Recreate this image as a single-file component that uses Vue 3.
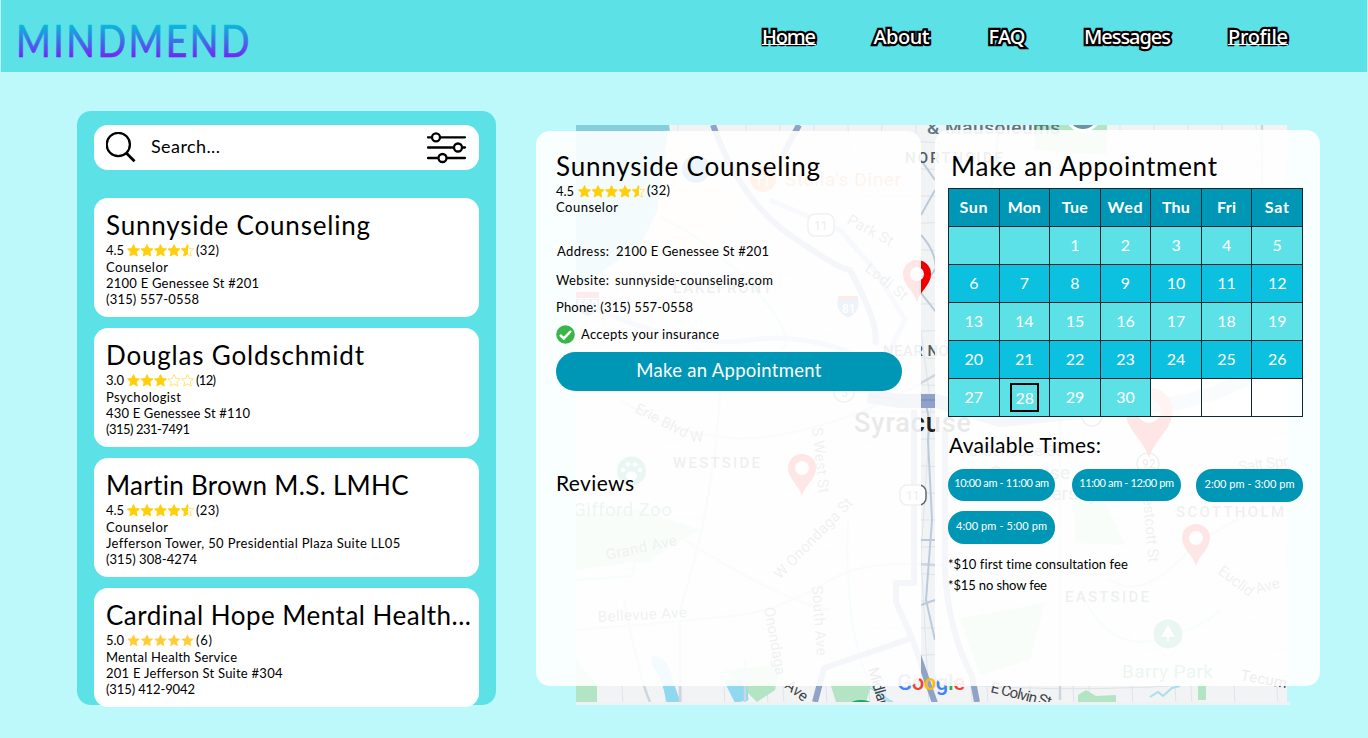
<script setup>
// Spreads a label over a given width by adjusting its tracking.
const vFit = {
  mounted(el, { value }) {
    if (!value) return
    const range = document.createRange()
    range.selectNodeContents(el)
    const natural = range.getBoundingClientRect().width
    const gaps = Math.max(1, el.textContent.length - 1)
    el.style.letterSpacing = `${(value - natural) / gaps}px`
  },
}

const nav = [
  { label: 'Home', w: 54, ul: true },
  { label: 'About', w: 56 },
  { label: 'FAQ', w: 37 },
  { label: 'Messages', w: 87 },
  { label: 'Profile', w: 60, ul: true },
]

const STAR = 'M6.5 .6 8.3 4.4 12.5 4.9 9.4 7.8 10.2 12 6.5 9.9 2.8 12 3.6 7.8 .5 4.9 4.7 4.4Z'
const HALF = 'M6.5 .6 6.5 9.9 2.8 12 3.6 7.8 .5 4.9 4.7 4.4Z'
const starsOf = (n) => [1, 2, 3, 4, 5].map((i) => (n >= i ? 'full' : n >= i - 0.5 ? 'half' : 'empty'))

const providers = [
  { name: 'Sunnyside Counseling', nw: 264, rating: '4.5', n: 4.5, count: '(32)', cw: 23, lines: [['Counselor', 62], ['2100 E Genessee St #201', 153], ['(315) 557-0558', 93]] },
  { name: 'Douglas Goldschmidt', nw: 258, rating: '3.0', n: 3, count: '(12)', cw: 20, lines: [['Psychologist', 75], ['430 E Genessee St #110', 144], ['(315) 231-7491', 84]] },
  { name: 'Martin Brown M.S. LMHC', nw: 303, rating: '4.5', n: 4.5, count: '(23)', cw: 23, lines: [['Counselor', 62], ['Jefferson Tower, 50 Presidential Plaza Suite LL05', 294], ['(315) 308-4274', 91]] },
  { name: 'Cardinal Hope Mental Health...', nw: 365, rating: '5.0', n: 5, count: '(6)', cw: 16, lines: [['Mental Health Service', 131], ['201 E Jefferson St Suite #304', 176], ['(315) 412-9042', 89]] },
]

const days = [['Sun', 28], ['Mon', 33], ['Tue', 26], ['Wed', 35], ['Thu', 28], ['Fri', 19], ['Sat', 24]]
const weeks = [
  ['', '', 1, 2, 3, 4, 5],
  [6, 7, 8, 9, 10, 11, 12],
  [13, 14, 15, 16, 17, 18, 19],
  [20, 21, 22, 23, 24, 25, 26],
  [27, 28, 29, 30, null, null, null],
]
const times = [['10:00 am - 11:00 am', 95], ['11:00 am - 12:00 pm', 95], ['2:00 pm - 3:00 pm', 90], ['4:00 pm - 5:00 pm', 91]]

const minor = []
for (let i = 0; i < 22; i++) {
  minor.push(`M${576 + i * 34} 125 l${(i % 3) * 9 - 12} 150 l18 130 l-10 150 l8 150`)
  minor.push(`M576 ${140 + i * 27} q180 ${(i % 4) * 8 - 14} 350 2 t364 -6`)
}
const pins = [[917, 302, 1], [802, 496, 1], [1196, 566, 1], [1149, 458, 1.68]]
</script>

<template>
  <div class="page">
    <header class="top">
      <svg class="logo" width="240" height="50" viewBox="0 0 240 50">
        <defs>
          <linearGradient id="brand" x1="0" y1="9" x2="0" y2="43" gradientUnits="userSpaceOnUse">
            <stop offset="0" stop-color="#00c4d8" />
            <stop offset="1" stop-color="#7424f5" />
          </linearGradient>
        </defs>
        <text x="-4" y="42.500" textLength="236" lengthAdjust="spacingAndGlyphs" fill="url(#brand)" stroke="url(#brand)" stroke-width=".7">MINDMEND</text>
      </svg>
      <nav>
        <a v-for="i in nav" :key="i.label" :class="{ ul: i.ul }"><span v-fit="i.w">{{ i.label }}</span></a>
      </nav>
    </header>

    <main>
      <aside>
        <div class="search">
          <svg width="32" height="32" viewBox="0 0 32 32" fill="none" stroke="#000" stroke-width="2.3">
            <circle cx="12.3" cy="12.500" r="11.6" /><path d="M20.300 21 28.500 29.300" stroke-width="2.800" />
          </svg>
          <span v-fit="69" class="ph">Search...</span>
          <svg class="filter" width="40" height="32" viewBox="0 0 40 32" fill="#fff" stroke="#000" stroke-width="2.3" stroke-linecap="round">
            <path d="M1 5.300H38M1 15.500H38M1 26H38" />
            <circle cx="9" cy="5.300" r="4" /><circle cx="31" cy="15.500" r="4" /><circle cx="15.500" cy="26" r="4" />
          </svg>
        </div>
        <article v-for="p in providers" :key="p.name" class="card">
          <h2><span v-fit="p.nw">{{ p.name }}</span></h2>
          <div class="rating">
            <span class="num">{{ p.rating }}</span>
            <svg width="68" height="13" viewBox="0 0 68 13" :class="{ warm: p.n === 5 }">
              <g v-for="(s, k) in starsOf(p.n)" :key="k" :transform="`translate(${k * 13.5} 0)`">
                <path :d="STAR" :class="s === 'full' ? 'full' : 'empty'" />
                <path v-if="s === 'half'" :d="HALF" class="full" />
              </g>
            </svg>
            <span v-fit="p.cw" class="count">{{ p.count }}</span>
          </div>
          <p v-for="l in p.lines" :key="l[0]"><span v-fit="l[1]">{{ l[0] }}</span></p>
        </article>
      </aside>

      <section class="stage">
        <svg class="map" width="714" height="580" viewBox="576 125 714 580">
          <rect x="576" y="125" width="711" height="580" fill="#f2f3f4" />
          <g fill="none" stroke="#dfe4ea" stroke-width="1"><path v-for="(d, k) in minor" :key="k" :d="d" /></g>
          <path d="M576 125H669Q674 150 668 190L640 245L576 290Z" fill="#85cfdc" />
          <path d="M668 130Q700 170 740 200L700 260L655 225Z" fill="#faf3e6" />
          <path d="M1035 125H1107V155L1035 150ZM576 515 640 510 700 530 650 560 576 570ZM1075 500 1105 502 1125 545 1075 543ZM960 618 1045 603 1030 660 980 675ZM576 660 597 685V702H576ZM724 670 780 665 775 690 757 702ZM829 680 872 683 866 702H836ZM1078 695 1086 690 1096 696 1116 695V702H1078ZM1198 684H1206V700H1198Z" fill="#b3e5c4" />
          <path d="M652 657Q668 655 672 680L680 702H667Q662 675 652 665ZM724 680H746L748 700 735 702ZM870 688 893 702" fill="#8fd8ee" stroke="#8fd8ee" />
          <path d="M660 217Q710 240 755 290T780 350M576 580 632 576 635 562 650 561 655 550M848 520Q845 600 858 650T893 702M1150 697 1158 692 1163 696 1172 688 1180 686M1085 600Q1110 650 1155 640T1220 610" fill="none" stroke="#a8dfec" stroke-width="2" />
          <g fill="none" stroke="#cdd5e0" stroke-width="2.5">
            <path d="M720 390Q715 500 680 610M576 630Q700 620 740 615T830 580 1000 575M620 400Q700 450 780 435T935 375M685 540Q780 600 830 610M624 600Q640 680 650 702M680 620V702M745 660V702M1060 420V700M1110 580Q1140 600 1180 560T1290 500M1000 125 970 330M1262 125V300" />
            <path d="M921 160 935 180M921 215 935 190M921 235Q935 250 936 268L921 290M921 293 936 312M921 400Q931 405 928 440L932 520 926 600 935 640M921 540H935M921 605 935 600" stroke-width="2" stroke="#bccbdc" />
          </g>
          <g fill="none" stroke="#8fa3c9" stroke-linejoin="round">
            <path d="M713 125Q740 200 790 235T850 270Q880 325 875 345M799 125 780 160" stroke-width="6" />
            <path d="M576 300Q680 350 750 340T900 375M770 200 840 230 875 270 905 320 880 370" stroke-width="5" stroke="#b1bfd9" />
            <path d="M868 396 900 401 936 401 1000 420Q1100 410 1160 405T1287 355" stroke-width="14" />
            <path d="M914 410V583H896V602L912 638 936 706M912 638 824 668 815 702" stroke-width="6" />
            <path d="M945 430V570Q948 630 972 676L977 702" stroke-width="6" />
            <path d="M868 396 900 400 936 400" stroke="#6f86b5" stroke-width="1" />
          </g>
          <g class="lbl">
            <text x="927" y="134" fill="#5d7783" textLength="133" class="maus">&amp; Mausoleums</text>
            <text x="905" y="163" textLength="98" class="caps">NORTHSIDE</text>
            <text x="673" y="293" textLength="99" class="caps">LAKEFRONT</text>
            <text x="883" y="356" textLength="96" class="caps">NEAR NORTH</text>
            <text x="673" y="468" textLength="87" class="caps">WESTSIDE</text>
            <text x="1176" y="517" textLength="108" class="caps">SCOTTHOLM</text>
            <text x="1065" y="602" textLength="84" class="caps">EASTSIDE</text>
            <text x="785" y="186" fill="#ed8442" textLength="116" class="poi">Stella's Diner</text>
            <text x="573" y="516" fill="#3b9d82" textLength="99" class="poi">Gifford Zoo</text>
            <text x="1122" y="678" fill="#419b74" textLength="91" class="poi">Barry Park</text>
            <text x="990" y="479" textLength="80" class="poi">Syracuse</text><text x="1015" y="500" class="poi">University</text>
            <text x="969" y="456" class="road" textLength="92">E Genesee St</text>
            <text x="854" y="432" textLength="117" class="city">Syracuse</text>
            <text transform="translate(634 412) rotate(27)" class="road">Erie Blvd</text>
            <text x="690" y="442" class="road">W</text>
            <text transform="translate(846 223) rotate(28)" class="road" textLength="50">Park St</text>
            <text transform="translate(864 270) rotate(39)" class="road" textLength="50">Lodi St</text>
            <text transform="translate(812 428) rotate(84)" class="road" textLength="66">S West St</text>
            <text transform="translate(607 560) rotate(-12)" class="road" textLength="72">Grand Ave</text>
            <text transform="translate(598 622) rotate(-3)" class="road" textLength="89">Bellevue Ave</text>
            <text transform="translate(780 580) rotate(-46)" class="road" textLength="106">W Onondaga St</text>
            <text transform="translate(764 608) rotate(80)" class="road">Onondaga</text>
            <text transform="translate(784 687) rotate(38)" class="road dark">Ave</text>
            <text transform="translate(812 586) rotate(86)" class="road" textLength="70">South Ave</text>
            <text transform="translate(868 669) rotate(74)" class="road dark" textLength="50">Midland</text>
            <text transform="translate(990 692) rotate(14)" class="road dark" textLength="62">E Colvin St</text>
            <text transform="translate(1143 498) rotate(85)" class="road" textLength="65">estcott St</text>
            <text transform="translate(1239 472) rotate(-7)" class="road" textLength="50">Salt Spr</text>
            <text transform="translate(1217 573) rotate(37)" class="road" textLength="40">Euclid</text>
            <text transform="translate(1257 594) rotate(-16)" class="road">Ave</text>
            <text transform="translate(1240 680) rotate(10)" class="road dark" textLength="47">Tecum</text>
          </g>
          <g fill="#fff" stroke="#5f686d" stroke-width="1.5" class="shield">
            <rect x="808" y="214" width="26" height="22" rx="7" /><rect x="900" y="485" width="26" height="20" rx="7" />
            <circle cx="844" cy="392" r="10" /><circle cx="1148" cy="464" r="11" /><circle cx="1092" cy="416" r="10" />
            <g fill="#555" stroke="none"><text x="814" y="230">11</text><text x="906" y="500">11</text><text x="841" y="397">5</text><text x="1142" y="468">92</text></g>
          </g>
          <g class="shield"><path d="M838 300H858Q861 311 848 318Q835 311 838 300Z" fill="#537ebd" /><path d="M838 296H858V300H838Z" fill="#d64d4d" /><text x="842" y="313" fill="#fff">81</text>
            <path d="M576 299H599Q601 311 588 316 577 312 576 306Z" fill="#537ebd" /><path d="M576 292H599V298H576Z" fill="#d64d4d" /><text x="577" y="309" fill="#fff">590</text></g>
          <circle cx="696" cy="169" r="15" fill="#3d9bea" stroke="#fff" stroke-width="2" /><circle cx="763" cy="179" r="13" fill="#ff8b3d" />
          <path d="M759 172V186M767 172V186M756 172V178H762V172" stroke="#fff" stroke-width="1.5" fill="none" />
          <circle cx="631.500" cy="471" r="14.500" fill="#2aa383" /><g fill="#fff"><ellipse cx="631.500" cy="476" rx="5.500" ry="4.500" /><circle cx="623" cy="470" r="2.200" /><circle cx="628" cy="464.500" r="2.200" /><circle cx="635" cy="464.500" r="2.200" /><circle cx="640" cy="470" r="2.200" /></g>
          <path d="M1157 643 1168 655 1179 643Z" fill="#fff" /><circle cx="1168" cy="634" r="14.500" fill="#20a56d" /><path d="M1168 625 1175 637H1169V641H1167V637H1161Z" fill="#fff" />
          <circle cx="1083" cy="114" r="18" fill="#fff" /><circle cx="1083" cy="114" r="15" fill="#70919d" />
          <ellipse cx="861" cy="703" rx="10" ry="3" fill="#16a765" />
          <g class="google"><text x="897" y="690" textLength="68"><tspan fill="#4285f4">G</tspan><tspan fill="#ea4335">o</tspan><tspan fill="#fbbc05">o</tspan><tspan fill="#4285f4">g</tspan><tspan fill="#34a853">l</tspan><tspan fill="#ea4335">e</tspan></text></g>
          <path v-for="(p, k) in pins" :key="'p' + k" :transform="`translate(${p[0]} ${p[1]}) scale(${p[2]})`" fill="#ee0000" fill-rule="evenodd" d="M0 0C-3-11-14-17-14-28A14 14 0 0 1 14-28C14-17 3-11 0 0ZM-7-28A7 7 0 1 0 7-28A7 7 0 1 0-7-28Z" />
          <rect x="576" y="702" width="714" height="3" fill="#eef2f2" />
        </svg>

        <div class="panel detail">
          <h2><span v-fit="264">Sunnyside Counseling</span></h2>
          <div class="rating">
            <span class="num">4.5</span>
            <svg width="68" height="13" viewBox="0 0 68 13">
              <g v-for="(s, k) in starsOf(4.5)" :key="k" :transform="`translate(${k * 13.5} 0)`">
                <path :d="STAR" :class="s === 'full' ? 'full' : 'empty'" />
                <path v-if="s === 'half'" :d="HALF" class="full" />
              </g>
            </svg>
            <span v-fit="23" class="count">(32)</span>
          </div>
          <p><span v-fit="62">Counselor</span></p>
          <p class="address"><span v-fit="52" class="key">Address:</span><span v-fit="153">2100 E Genessee St #201</span></p>
          <p class="site"><span v-fit="53" class="key">Website:</span><span v-fit="158">sunnyside-counseling.com</span></p>
          <p class="phone"><span v-fit="137">Phone: (315) 557-0558</span></p>
          <p class="accepts">
            <svg width="19" height="19" viewBox="0 0 19 19"><circle cx="9.500" cy="9.500" r="9.300" fill="#39b54a" /><path d="M4 9.800 7.800 13.400 15 6" fill="none" stroke="#fff" stroke-width="2.500" /></svg>
            <span v-fit="138">Accepts your insurance</span>
          </p>
          <button class="book"><span v-fit="185">Make an Appointment</span></button>
          <h3><span v-fit="78">Reviews</span></h3>
        </div>

        <div class="panel booking">
          <h2><span v-fit="266">Make an Appointment</span></h2>
          <table>
            <thead><tr><th v-for="d in days" :key="d[0]"><span v-fit="d[1]">{{ d[0] }}</span></th></tr></thead>
            <tbody>
              <tr v-for="(w, r) in weeks" :key="r" :class="{ deep: r % 2 }">
                <td v-for="(d, c) in w" :key="c" :class="{ off: d === null }"><span :class="{ picked: d === 28 }">{{ d }}</span></td>
              </tr>
            </tbody>
          </table>
          <h3><span v-fit="152">Available Times:</span></h3>
          <div class="times">
            <button v-for="(t, k) in times" :key="t[0]" :class="'t' + k"><span v-fit="t[1]">{{ t[0] }}</span></button>
          </div>
          <p class="fee"><span v-fit="180">*$10 first time consultation fee</span></p>
          <p class="fee"><span v-fit="99">*$15 no show fee</span></p>
        </div>
      </section>
    </main>
  </div>
</template>

<style>
body { background: #bdf9fa; overflow: hidden; }
</style>

<style scoped>
.page { width: 1368px; height: 738px; overflow: hidden; background: #bdf9fa; color: #000; font: 13px/16px Lato, sans-serif; }
.page * { box-sizing: border-box; }
h2, h3, p { margin: 0; font-weight: 400; white-space: nowrap; }
button { border: 0; padding: 0; font-family: inherit; color: #fff; background: #0097b6; white-space: nowrap; }
.top { display: flex; justify-content: space-between; height: 72px; margin: 0 1px; padding: 0 77px 0 19px; background: #5ce1e6; }
.logo { margin-top: 14px; overflow: visible; }
.logo text { font: 400 45px Lato, sans-serif; letter-spacing: 3px; }
nav { display: grid; grid-template-columns: 111.5px 115px 95.5px 144px 62px; padding-top: 22px; font: 500 20px/30px "Noto Sans", sans-serif; color: #fff; }
nav a { position: relative; height: 30px; -webkit-text-stroke: 4.5px #000; paint-order: stroke fill; stroke-linejoin: round; }
nav a.ul::after { content: ""; position: absolute; left: 0; top: 22px; width: 44px; height: 1px; background: #fff; }
nav a.ul:first-child::after { width: 54px; }
nav a.ul:last-child::after { width: 60px; }
main { display: flex; gap: 40px; padding: 39px 0 0 77px; }
aside { display: flex; flex-direction: column; gap: 11px; width: 419px; height: 594px; padding: 14px 17px 0; border-radius: 14px; background: #5ce1e6; }
.search { display: flex; flex: none; align-items: center; height: 45px; margin-bottom: 17px; padding: 0 12px; border-radius: 14px; background: #fff; }
.search .ph { margin: -3px 0 0 13px; font-size: 18px; line-height: 24px; }
.search .filter { margin-left: auto; }
.card { flex: none; height: 119px; padding: 11px 0 0 12px; border-radius: 14px; background: #fff; }
h2 { height: 33px; font-size: 26px; line-height: 32px; }
.rating { display: flex; height: 17px; line-height: 17px; }
.num { width: 21px; white-space: nowrap; }
.rating svg { margin-top: 2px; }
.count { margin-left: 1px; }
.full { fill: #ffcf0a; stroke: #ffcf0a; stroke-width: .9; stroke-linejoin: round; }
.empty { fill: #fff; stroke: #ffda55; stroke-width: .8; stroke-linejoin: round; }
.warm .full { fill: #ffcd38; stroke: #ffcd38; stroke-width: .3; }
.stage { position: relative; display: flex; gap: 14px; padding-top: 19px; }
.map { position: absolute; left: 40px; top: 14px; }
.panel { position: relative; width: 385px; height: 556px; border-radius: 14px; background: rgba(255, 255, 255, .9); }
.detail { height: 555px; margin-top: 1px; padding: 19px 19px 0 20px; }
.detail h2 { height: 33px; }
.detail .rating { height: 16px; }
.detail .num { width: 22px; }
.detail .rating svg { margin-top: 2px; }
.detail .count { margin-top: -1px; }
.address { margin: 28px 0 0 1px; }
.key { display: inline-block; width: 59px; }
.site { margin-top: 13px; }
.phone { margin-top: 11px; }
.accepts { display: flex; align-items: center; gap: 6px; margin-top: 10px; height: 19px; }
.accepts span { margin-top: -2px; }
.book { display: block; width: 346px; height: 39px; margin-top: 8px; padding-bottom: 3px; border-radius: 20px; font-size: 18.5px; }
.detail h3 { margin-top: 79px; }
h3 { font-size: 21px; line-height: 26px; }
.booking { padding: 20px 0 0 13px; }
.booking h2 { height: 38px; padding-left: 3px; }
table { width: 355px; height: 229px; border-collapse: collapse; table-layout: fixed; font-size: 16px; line-height: 18px; color: #fff; }
th, td { height: 38px; padding: 0 0 2px; border: 1px solid #10292e; text-align: center; background: #5ce1e6; font-weight: 400; }
th { background: #0097b6; font-weight: 700; font-size: 16px; }
.deep td { background: #0cc0df; }
td.off { background: rgba(255, 255, 255, .5); }
.picked { display: inline-block; width: 29px; height: 29px; margin: 1px 0 0 1px; border: 2px solid #000; line-height: 25px; vertical-align: middle; }
.booking h3 { margin: 15px 0 0 1px; }
.times { display: grid; grid-template-columns: 107px 109px 107px; column-gap: 16px; row-gap: 9px; margin-top: 11px; }
.times button { height: 32px; padding-bottom: 5px; border-radius: 16px; font-size: 11px; }
.times .t1 { position: relative; left: 1px; }
.times .t2 { height: 33px; }
.times .t3 { height: 33px; }
.fee { margin-top: 12px; }
.fee + .fee { margin-top: 5px; }
.lbl { font: 15px Roboto, sans-serif; fill: #5f6a70; }
.caps { font-size: 15px; font-weight: 500; fill: #515b62; }
.poi { font-size: 19px; }
.maus { font-size: 19px; font-weight: 500; }
.road { font-size: 15px; }
.dark { fill: #3d4347; }
.city { font-size: 27px; font-weight: 500; fill: #222; }
.shield text { font: 500 12px Roboto, sans-serif; }
.google { font: 500 22px Roboto, sans-serif; }
</style>
